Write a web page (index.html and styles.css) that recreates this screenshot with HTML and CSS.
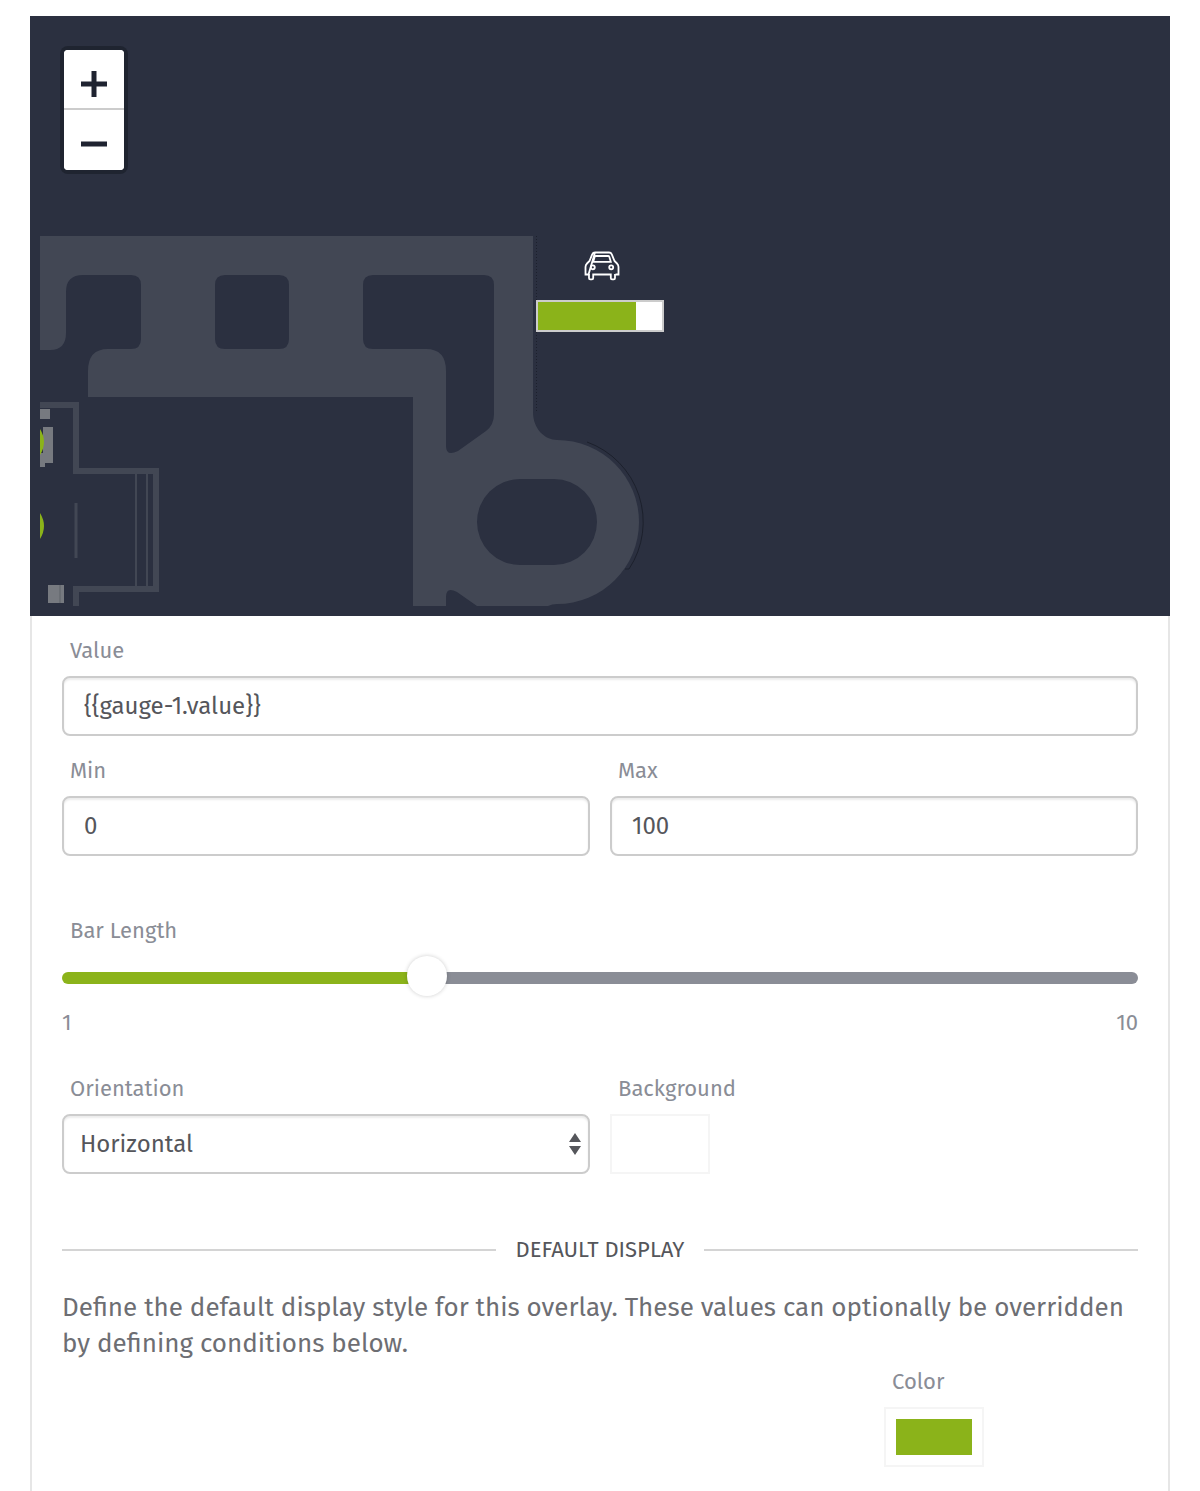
FILE: index.html
```html
<!DOCTYPE html>
<html lang="en">
<head>
    <meta charset="UTF-8">
    <meta name="viewport" content="width=device-width, initial-scale=1.0">
    <title>Gauge Overlay</title>
    <link rel="stylesheet" href="styles.css">
</head>
<body>
    <div class="map">
        <svg class="floor" width="620" height="600" viewBox="30 16 620 600" aria-hidden="true">
            <!-- road -->
            <path class="road" fill-rule="evenodd" d="M40 236H533V412C533 429 545 440 557 440A82 82 0 0 1 557 604Q552 604 548 606H477L457 592Q446 586 446 597V606H413V397H88V371Q88 349 108 349H131Q141 349 141 339V285Q141 275 131 275H83Q66 275 66 292V333Q66 350 50 350H40Z
                M225 275H279Q289 275 289 285V339Q289 349 279 349H225Q215 349 215 339V285Q215 275 225 275Z
                M373 275H484Q494 275 494 285V414Q494 425 486 431L458 451Q446 457 446 446V371Q446 349 426 349H373Q363 349 363 339V285Q363 275 373 275Z
                M520 479H554A43 43 0 0 1 554 565H520A43 43 0 0 1 520 479Z"/>
            <path class="edge dotted" d="M536.5 236V413"/>
            <path class="edge" d="M587 442A85 85 0 0 1 629 569H625"/>
            <!-- building -->
            <path class="wall" d="M40 405H76V471H156V589H76V606"/>
            <path class="thin" d="M136 474V587M147 474V587"/>
            <path class="thin wide" d="M76 503V558"/>
            <path class="block" d="M40 409H50V419H40ZM43 427H53V463H45V467H40V453H43ZM48 585H64V603H48Z"/>
            <path class="seam" d="M60 585V603"/>
            <path class="spot" d="M40 429Q48 442 40 455ZM40 513Q48 526 40 539Z"/>
        </svg>

        <div class="zoom">
            <button type="button" aria-label="Zoom in"><svg width="26" height="26" viewBox="0 0 26 26"><path d="M0 13H26M13 0V26"/></svg></button>
            <button type="button" aria-label="Zoom out"><svg width="26" height="26" viewBox="0 0 26 26"><path d="M0 13H26"/></svg></button>
        </div>

        <div class="marker">
            <svg class="car" width="36" height="32" viewBox="0 0 36 32" aria-hidden="true">
                <path d="M11 2.500H25Q27 2.500 27.800 4.300L30.500 11L33 13.500Q34.500 15 34.500 17V24.500H31.500M4.500 24.500H1.500V17Q1.500 15 3 13.500L5.500 11L8.200 4.300Q9 2.500 11 2.500Z"/>
                <path d="M5 24V28Q5 29.300 6.200 29.300H8Q9.200 29.300 9.200 28V24.500H26.800V28Q26.800 29.300 28 29.300H29.800Q31 29.300 31 28V24"/>
                <path d="M11.800 6H24.200Q25 6 25.300 6.800L26.800 11.800H9.200L10.700 6.800Q11 6 11.800 6Z"/>
                <circle cx="8.800" cy="17.300" r="2"/>
                <circle cx="27.200" cy="17.300" r="2"/>
            </svg>
            <div class="bar"><div class="bar_fill" style="width: 79%"></div></div>
        </div>
    </div>

    <form class="panel">
        <div class="field">
            <label for="value">Value</label>
            <input class="text" type="text" id="value" value="{{gauge-1.value}}">
        </div>
        <div class="row">
            <div class="field">
                <label for="min">Min</label>
                <input class="text" type="text" id="min" value="0">
            </div>
            <div class="field">
                <label for="max">Max</label>
                <input class="text" type="text" id="max" value="100">
            </div>
        </div>

        <div class="field length">
            <label for="length">Bar Length</label>
            <input class="slider" type="range" id="length" min="1" max="10" value="4">
            <div class="limits"><span>1</span><span>10</span></div>
        </div>

        <div class="row">
            <div class="field">
                <label for="orientation">Orientation</label>
                <div class="select">
                    <select id="orientation">
                        <option selected>Horizontal</option>
                        <option>Vertical</option>
                    </select>
                    <svg width="12" height="22" viewBox="0 0 12 22" aria-hidden="true"><path d="M6 0L12 9H0ZM6 22L0 13H12Z"/></svg>
                </div>
            </div>
            <div class="field">
                <label for="background">Background</label>
                <input class="color" type="color" id="background" value="#ffffff">
            </div>
        </div>

        <h2>Default Display</h2>
        <p>Define the default display style for this overlay. These values can optionally be overridden by defining conditions below.</p>

        <div class="row quarters">
            <div class="field last">
                <label for="color">Color</label>
                <input class="color" type="color" id="color" value="#8bb31a">
            </div>
        </div>
    </form>
</body>
</html>
```

FILE: styles.css
```css
*{
    box-sizing: border-box;
    margin: 0;
    padding: 0;
}
body{
    padding: 16px 30px 0;
    background: #fff;
    color: #55565b;
    font-family: "Fira Sans", "Noto Sans", sans-serif;
    font-size: 22px;
    line-height: 28px;
}
input, select, button{
    font: inherit;
    color: inherit;
}

/* map */
.map{
    position: relative;
    height: 600px;
    background: #2b3040;
    overflow: hidden;
}
.floor{
    display: block;
}
.road{
    fill: #424754;
}
.edge{
    fill: none;
    stroke: #1c202c;
    stroke-width: 1;
}
.dotted{
    stroke-dasharray: 1 2;
}
.wall{
    fill: none;
    stroke: #424754;
    stroke-width: 6;
}
.thin{
    stroke: #424754;
    stroke-width: 2;
}
.wide{
    stroke-width: 3;
}
.block{
    fill: #777a80;
}
.seam{
    stroke: #5f6269;
    stroke-width: 1;
}
.spot{
    fill: #8bb31a;
}
.zoom{
    position: absolute;
    top: 34px;
    left: 34px;
    width: 60px;
    border-radius: 4px;
    background: #fff;
    box-shadow: 0 0 0 4px #1f2430;
    overflow: hidden;
}
.zoom button{
    display: flex;
    align-items: center;
    justify-content: center;
    width: 60px;
    height: 60px;
    padding-top: 8px;
    border: 0;
    background: #fff;
    cursor: pointer;
}
.zoom button:first-child{
    padding-top: 10px;
    border-bottom: 2px solid #ccc;
}
.zoom path{
    stroke: #1f2330;
    stroke-width: 5;
}
.marker{
    position: absolute;
    top: 234px;
    left: 506px;
    width: 128px;
}
.car{
    display: block;
    margin: 0 0 18px 48px;
    fill: none;
    stroke: #fff;
    stroke-width: 1.8;
}
.bar{
    height: 32px;
    border: 2px solid #ccc;
    background: #fff;
}
.bar_fill{
    height: 100%;
    background: #8bb31a;
}

/* settings */
.panel{
    padding: 0 30px 24px;
    border: solid #e6e6e6;
    border-width: 0 2px;
}
.row{
    display: grid;
    grid-template-columns: 1fr 1fr;
    column-gap: 20px;
}
.quarters{
    grid-template-columns: repeat(4, 1fr);
}
label{
    display: block;
    padding: 21px 8px 11px;
    color: #8a8d96;
}
.text, .select select{
    display: block;
    width: 100%;
    height: 60px;
    padding: 0 20px;
    border: 2px solid #ccc;
    border-radius: 8px;
    background: #fff;
    box-shadow: inset 0 2px 2px rgba(0, 0, 0, .08);
    font-size: 24px;
}
.select{
    position: relative;
}
.select select{
    padding: 0 32px 0 16px;
    appearance: none;
}
.select svg{
    position: absolute;
    top: 19px;
    right: 9px;
    fill: #55565b;
    pointer-events: none;
}
.color{
    display: block;
    width: 100px;
    height: 60px;
    padding: 10px;
    border: 2px solid #f5f5f5;
    background: #fff;
    appearance: none;
}
.color::-webkit-color-swatch-wrapper{
    padding: 0;
}
.color::-webkit-color-swatch{
    border: 0;
    border-radius: 0;
}

.length{
    padding: 40px 0 17px;
}
.slider{
    display: block;
    width: 100%;
    height: 40px;
    background: none;
    appearance: none;
}
.slider::-webkit-slider-runnable-track{
    height: 12px;
    margin-top: 4px;
    border-radius: 6px;
    background: linear-gradient(to right, #8bb31a 34%, #8a8d96 34%);
}
.slider::-webkit-slider-thumb{
    width: 40px;
    height: 40px;
    margin-top: -16px;
    border-radius: 50%;
    background: #fff;
    box-shadow: 0 0 4px rgba(0, 0, 0, .2);
    appearance: none;
}
.limits{
    display: flex;
    justify-content: space-between;
    margin-top: 13px;
    color: #8a8d96;
}

h2{
    display: flex;
    align-items: center;
    gap: 20px;
    margin: 62px 0 26px;
    font-size: 22px;
    font-weight: normal;
    text-transform: uppercase;
}
h2::before, h2::after{
    content: "";
    flex: 1;
    height: 2px;
    background: #d4d4d4;
}
p{
    color: #6d6e73;
    font-size: 26px;
    line-height: 36px;
}
.last{
    grid-column: 4;
}
.last label{
    padding-top: 6px;
}
```
